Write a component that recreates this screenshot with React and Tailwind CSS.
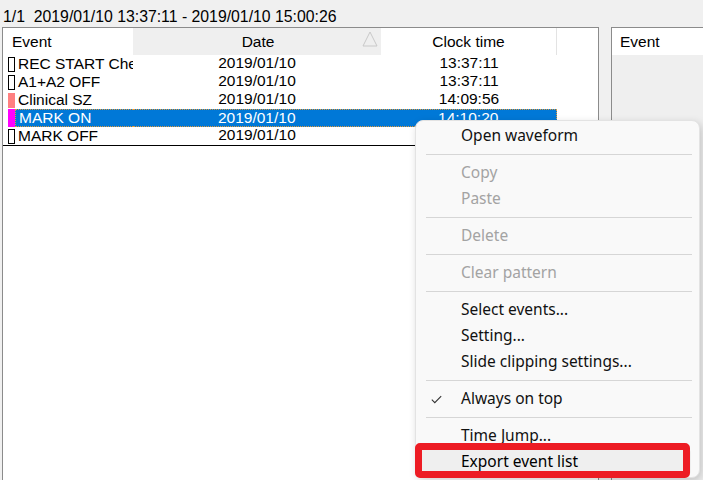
import { Fragment } from "react";

const rows = [
  { name: "REC START Check", date: "2019/01/10", time: "13:37:11", mark: "outline" },
  { name: "A1+A2 OFF", date: "2019/01/10", time: "13:37:11", mark: "outline" },
  { name: "Clinical SZ", date: "2019/01/10", time: "14:09:56", mark: "salmon" },
  { name: "MARK ON", date: "2019/01/10", time: "14:10:20", mark: "magenta", selected: true },
  { name: "MARK OFF", date: "2019/01/10", time: "14:10:35", mark: "outline" },
];

const menu = [
  [{ label: "Open waveform" }],
  [{ label: "Copy", disabled: true }, { label: "Paste", disabled: true }],
  [{ label: "Delete", disabled: true }],
  [{ label: "Clear pattern", disabled: true }],
  [{ label: "Select events..." }, { label: "Setting..." }, { label: "Slide clipping settings..." }],
  [{ label: "Always on top", checked: true }],
  [{ label: "Time Jump..." }, { label: "Export event list", hover: true }],
];

const Marker = ({ kind }) => {
  if (kind === "salmon") return <div className="w-[7px] h-[15px] bg-[#ff8080] shrink-0" />;
  if (kind === "magenta") return <div className="w-[7px] h-[18px] bg-[#ff00ff] shrink-0" />;
  return <div className="w-[7px] h-[15px] border border-black bg-white shrink-0" />;
};

const EventRow = ({ row }) => (
  <div className="flex h-[18px] items-center">
    <div className="w-[130px] flex items-center pl-[5px] shrink-0">
      <Marker kind={row.mark} />
      {!row.selected && (
        <span className="pl-[3px] whitespace-nowrap overflow-hidden">{row.name}</span>
      )}
      {row.selected && (
        <span className="pl-[3px] whitespace-nowrap overflow-hidden h-[18px] leading-[16px] flex-1 bg-[#0078d7] text-white border-y border-l border-dotted border-[#e09a3c]">
          {row.name}
        </span>
      )}
    </div>
    <div
      className={
        row.selected
          ? "flex h-[18px] w-[424px] bg-[#0078d7] text-white border-y border-r border-dotted border-[#e09a3c]"
          : "flex h-[18px] w-[424px]"
      }
    >
      <div className="w-[248px] text-center leading-[16px]">{row.date}</div>
      <div className="w-[176px] text-center leading-[16px]">{row.time}</div>
    </div>
  </div>
);

const ContextMenu = () => (
  <div className="absolute left-[415px] top-[120px] w-[285px] h-[358px] rounded-[8px] bg-[#f9f9f9] border border-[#e3e3e3] shadow-[2px_3px_8px_rgba(0,0,0,0.18)] pt-[2px] font-['Noto_Sans',sans-serif] text-[15.5px]">
    {menu.map((group, gi) => (
      <Fragment key={gi}>
        {gi > 0 && (
          <div className="h-[11px] flex items-center pl-[10px] pr-[7px]">
            <div className="h-px w-full bg-[#d6d6d6]" />
          </div>
        )}
        {group.map((item) => (
          <div
            key={item.label}
            className={
              item.hover
                ? "relative h-[26px] flex items-center pl-[45px] mr-[8px] rounded-[4px] bg-[#efefef] text-black"
                : item.disabled
                ? "relative h-[26px] flex items-center pl-[45px] text-[#a3a3a3]"
                : "relative h-[26px] flex items-center pl-[45px] text-[#111]"
            }
          >
            {item.checked && (
              <svg className="absolute left-[15px] top-[9px]" width="11" height="9" viewBox="0 0 11 9">
                <polyline points="0.8,4.6 3.8,7.6 10.2,1.2" fill="none" stroke="#333" strokeWidth="1.1" />
              </svg>
            )}
            <span className="leading-none -mt-[1px]">{item.label}</span>
          </div>
        ))}
      </Fragment>
    ))}
  </div>
);

export default function App() {
  return (
    <div className="relative w-[703px] h-[480px] overflow-hidden bg-[#f0f0f0] text-black font-['Liberation_Sans',Arial,sans-serif] text-[15.5px]">
      <div className="h-[27px] pt-[8px] pl-[3px] leading-[18px] whitespace-pre text-[15.8px]">
        1/1  2019/01/10 13:37:11 - 2019/01/10 15:00:26
      </div>

      <div className="flex">
        <div className="ml-[2px] w-[597px] h-[453px] bg-white border-l border-t border-r border-[#8b8b8b]">
          <div className="flex h-[27px]">
            <div className="w-[130px] bg-white pl-[9px] flex items-center">Event</div>
            <div className="relative w-[248px] bg-[#efefef] flex items-center justify-center">
              <span className="pl-[2px]">Date</span>
              <svg className="absolute left-[229px] top-[3px]" width="16" height="17" viewBox="0 0 16 17">
                <polygon points="8,1 15,15 1,15" fill="none" stroke="#c9c9c9" strokeWidth="1" />
              </svg>
            </div>
            <div className="w-[176px] bg-white flex items-center justify-center border-r border-[#e3e3e3]">
              Clock time
            </div>
          </div>
          {rows.map((row) => (
            <EventRow key={row.name} row={row} />
          ))}
          <div className="h-px w-[554px] bg-black" />
        </div>

        <div className="ml-[12px] flex-1 h-[453px] border-l border-t border-[#8b8b8b] bg-[#efefef]">
          <div className="h-[27px] bg-white pl-[8px] flex items-center">Event</div>
        </div>
      </div>

      <ContextMenu />

      <div className="absolute left-[415px] top-[443px] w-[275px] h-[35px] rounded-[5px] border-[7px] border-[#ed1c24]" />
    </div>
  );
}
